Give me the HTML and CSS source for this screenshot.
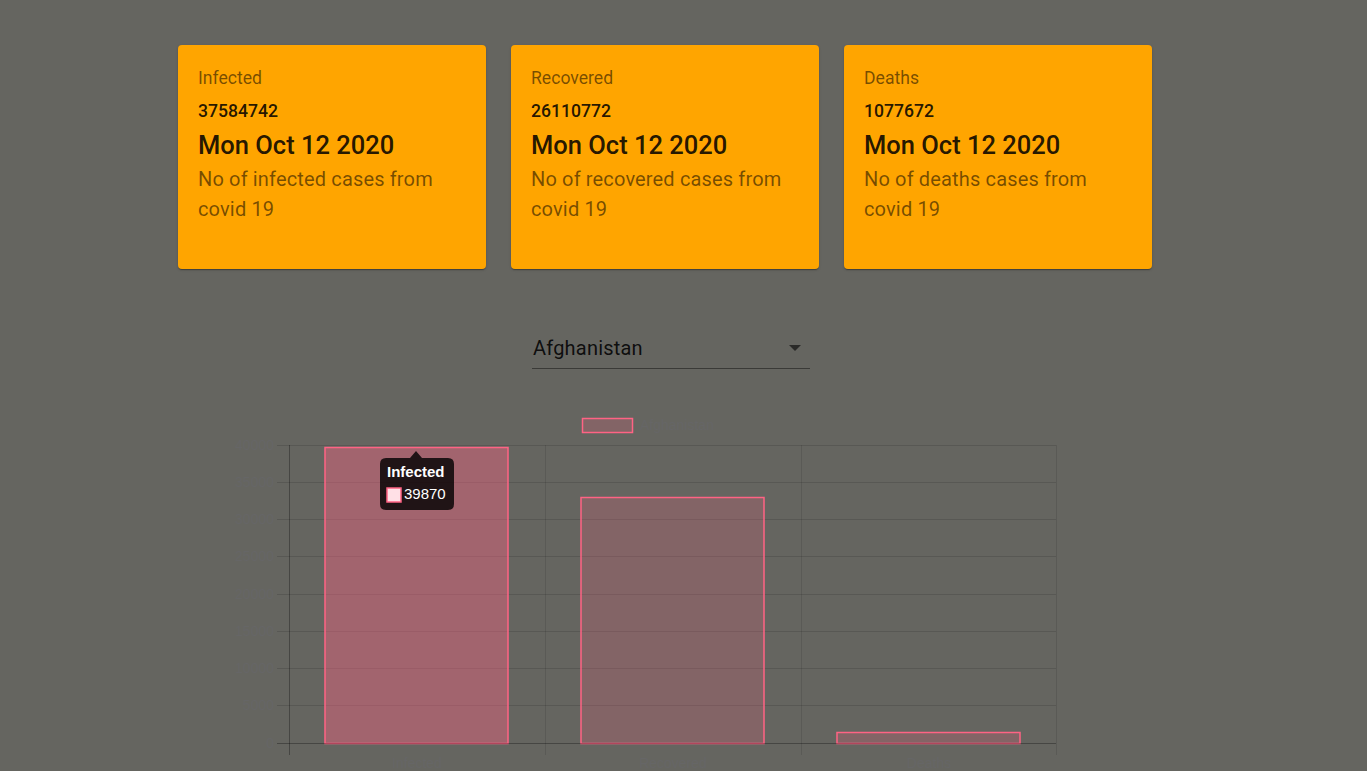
FILE: index.html
```html
<!DOCTYPE html>
<html>
<head>
<meta charset="utf-8">
<link rel="stylesheet" href="styles.css">
</head>
<body>
<div class="page">
  <div class="cards">
    <div class="card">
      <div class="label">Infected</div>
      <div class="count">37584742</div>
      <div class="date">Mon Oct 12 2020</div>
      <div class="desc">No of infected cases from covid 19</div>
    </div>
    <div class="card">
      <div class="label">Recovered</div>
      <div class="count">26110772</div>
      <div class="date">Mon Oct 12 2020</div>
      <div class="desc">No of recovered cases from covid 19</div>
    </div>
    <div class="card">
      <div class="label">Deaths</div>
      <div class="count">1077672</div>
      <div class="date">Mon Oct 12 2020</div>
      <div class="desc">No of deaths cases from covid 19</div>
    </div>
  </div>

  <div class="picker">
    <div class="select">
      <span class="value">Afghanistan</span>
      <svg class="caret" width="12" height="6" viewBox="0 0 12 6"><path d="M0 0 L6 6 L12 0 Z" fill="#2a2a28"/></svg>
    </div>
  </div>

  <div class="chart">
    <svg width="900" height="371" viewBox="233 400 900 371" class="chart-svg">
      <!-- legend -->
      <rect x="582.5" y="418.5" width="50" height="14" fill="rgba(255,99,132,0.2)" stroke="rgb(255,99,132)" stroke-width="1.5"/>
      <text x="640" y="430" class="tick">Afghanistan</text>

      <!-- horizontal grid -->
      <g stroke="rgba(0,0,0,0.12)" stroke-width="1">
        <line x1="277" y1="445.5" x2="1056" y2="445.5"/>
        <line x1="277" y1="482.5" x2="1056" y2="482.5"/>
        <line x1="277" y1="519.5" x2="1056" y2="519.5"/>
        <line x1="277" y1="556.5" x2="1056" y2="556.5"/>
        <line x1="277" y1="594.5" x2="1056" y2="594.5"/>
        <line x1="277" y1="631.5" x2="1056" y2="631.5"/>
        <line x1="277" y1="668.5" x2="1056" y2="668.5"/>
        <line x1="277" y1="705.5" x2="1056" y2="705.5"/>
      </g>
      <!-- vertical grid -->
      <g stroke="rgba(0,0,0,0.1)" stroke-width="1">
        <line x1="545.5" y1="445" x2="545.5" y2="755"/>
        <line x1="801.5" y1="445" x2="801.5" y2="755"/>
        <line x1="1056.5" y1="445" x2="1056.5" y2="755"/>
      </g>
      <!-- axes -->
      <line x1="289.5" y1="445" x2="289.5" y2="755" stroke="rgba(0,0,0,0.3)" stroke-width="1"/>

      <!-- y ticks -->
      <g class="tick" text-anchor="end">
        <text x="274" y="450">40000</text>
        <text x="274" y="487">35000</text>
        <text x="274" y="524">30000</text>
        <text x="274" y="561">25000</text>
        <text x="274" y="599">20000</text>
        <text x="274" y="636">15000</text>
        <text x="274" y="673">10000</text>
        <text x="274" y="710">5000</text>
        <text x="274" y="748">0</text>
      </g>
      <!-- x ticks -->
      <g class="tick" text-anchor="middle">
        <text x="417" y="768">Infected</text>
        <text x="673" y="768">Recovered</text>
        <text x="929" y="768">Deaths</text>
      </g>

      <!-- bars -->
      <rect x="325" y="447.5" width="183" height="296" fill="rgba(255,99,132,0.4)" stroke="rgb(255,99,132)" stroke-width="1.5"/>
      <rect x="581" y="497.5" width="183" height="246" fill="rgba(255,99,132,0.2)" stroke="rgb(255,99,132)" stroke-width="1.5"/>
      <rect x="837" y="732.5" width="183" height="11" fill="rgba(255,99,132,0.2)" stroke="rgb(255,99,132)" stroke-width="1.5"/>
      <line x1="277" y1="743.5" x2="1056" y2="743.5" stroke="rgba(0,0,0,0.3)" stroke-width="1"/>

      <!-- tooltip -->
      <path d="M386 458 H410 L416 451 L422 458 H448 Q454 458 454 464 V504 Q454 510 448 510 H386 Q380 510 380 504 V464 Q380 458 386 458 Z" fill="rgba(0,0,0,0.8)"/>
      <text x="387" y="477" class="tip-title">Infected</text>
      <rect x="387" y="488" width="14" height="14" fill="#ffe0e6" stroke="rgb(255,99,132)" stroke-width="1.5"/>
      <text x="404" y="499" class="tip-body">39870</text>
    </svg>
  </div>
</div>
</body>
</html>
```

FILE: styles.css
```css
html, body {
  margin: 0;
  padding: 0;
}
body {
  background: #656560;
  font-family: Roboto, "Noto Sans", sans-serif;
  width: 1367px;
  height: 771px;
  overflow: hidden;
}
.page {
  padding-top: 45px;
}
.cards {
  display: flex;
  gap: 25px;
  margin-left: 178px;
}
.card {
  box-sizing: border-box;
  width: 308px;
  height: 224px;
  background: #ffa500;
  border-radius: 4px;
  box-shadow: 0 2px 1px -1px rgba(0,0,0,0.2), 0 1px 1px 0 rgba(0,0,0,0.14), 0 1px 3px 0 rgba(0,0,0,0.12);
  padding: 21px 20px;
}
.label {
  font-size: 17.6px;
  line-height: 24px;
  color: rgba(0,0,0,0.54);
}
.count {
  margin-top: 9px;
  font-size: 17.6px;
  line-height: 24px;
  font-weight: 500;
  color: rgba(0,0,0,0.87);
}
.date {
  margin-top: 6px;
  font-size: 25.5px;
  line-height: 32px;
  font-weight: 500;
  color: rgba(0,0,0,0.87);
}
.desc {
  margin-top: 3px;
  font-size: 20px;
  line-height: 30px;
  color: rgba(0,0,0,0.54);
  letter-spacing: 0.15px;
}
.picker {
  margin-top: 67px;
  margin-left: 532px;
  width: 278px;
}
.select {
  display: flex;
  align-items: center;
  justify-content: space-between;
  padding: 0 9px 8px 1px;
  border-bottom: 1px solid rgba(0,0,0,0.42);
}
.value {
  font-size: 20px;
  line-height: 24px;
  color: rgba(0,0,0,0.87);
  letter-spacing: 0.2px;
}
.caret {
  display: block;
}
.chart {
  margin-top: 31px;
  margin-left: 233px;
  width: 900px;
  height: 371px;
}
.chart-svg {
  display: block;
}
.tick {
  font-family: "Liberation Sans", Arial, sans-serif;
  font-size: 14px;
  fill: #666;
}
.tip-title {
  font-family: "Liberation Sans", Arial, sans-serif;
  font-size: 15px;
  font-weight: bold;
  fill: #fff;
}
.tip-body {
  font-family: "Liberation Sans", Arial, sans-serif;
  font-size: 15px;
  fill: #fff;
}
```
